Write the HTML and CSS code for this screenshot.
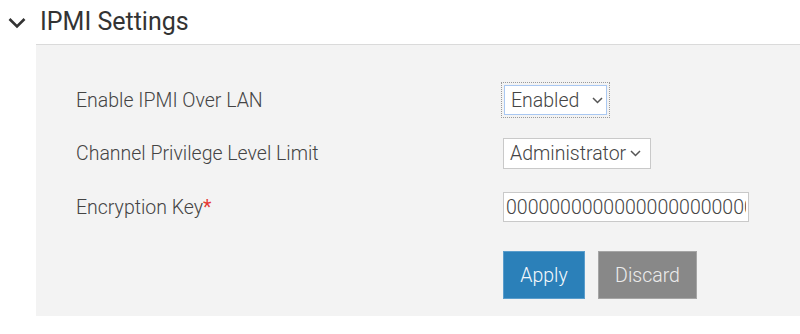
FILE: index.html
```html
<!DOCTYPE html>
<html>
<head>
<meta charset="utf-8">
<link rel="stylesheet" href="styles.css">
</head>
<body>
<div class="header">
  <svg class="caret" width="18" height="12" viewBox="0 0 18 12"><path d="M1.5 2 L9 9.5 L16.5 2" fill="none" stroke="#333" stroke-width="2.6"/></svg>
  <span class="title">IPMI Settings</span>
</div>
<div class="panel">
  <div class="row row1">
    <div class="label">Enable IPMI Over LAN</div>
    <div class="focus-ring">
      <div class="select select-enabled focused"><span>Enabled</span><svg class="chev" width="11" height="7" viewBox="0 0 11 7"><path d="M1 1 L5.5 5.5 L10 1" fill="none" stroke="#555" stroke-width="1.5"/></svg></div>
    </div>
  </div>
  <div class="row row2">
    <div class="label">Channel Privilege Level Limit</div>
    <div class="select select-admin"><span>Administrator</span><svg class="chev" width="11" height="7" viewBox="0 0 11 7"><path d="M1 1 L5.5 5.5 L10 1" fill="none" stroke="#555" stroke-width="1.5"/></svg></div>
  </div>
  <div class="row row3">
    <div class="label">Encryption Key<span class="req">*</span></div>
    <input class="text-input" type="text" value="0000000000000000000000000000000000000000">
  </div>
  <div class="row buttons">
    <div class="label"></div>
    <button class="btn btn-apply">Apply</button>
    <button class="btn btn-discard">Discard</button>
  </div>
</div>
</body>
</html>
```
FILE: styles.css
```css
html, body {
  margin: 0;
  padding: 0;
  background: #fff;
  font-family: Roboto, "Liberation Sans", sans-serif;
  overflow: hidden;
}
.header {
  height: 44px;
  display: flex;
  align-items: center;
}
.caret {
  margin-left: 8px;
  margin-top: 1px;
}
.title {
  margin-left: 14px;
  font-size: 25px;
  color: #333;
  margin-top: -2px;
}
.panel {
  margin-left: 36px;
  background: #f3f3f3;
  border-top: 1px solid #dadada;
  padding: 37px 0 17px 40px;
}
.row {
  display: flex;
  align-items: center;
}
.label {
  width: 427px;
  flex: none;
  font-size: 19.5px;
  font-weight: 300;
  color: #444;
}
.req {
  color: #e53935;
  font-weight: 400;
}
.row1 { height: 36px; }
.row2 { height: 31px; margin-top: 20px; }
.row3 { height: 30px; margin-top: 23px; }
.buttons { height: 48px; margin-top: 29px; }
.focus-ring {
  border: 1px dotted #9a9a9a;
  padding: 2px;
  margin-left: -2px;
}
.select {
  box-sizing: border-box;
  background: #fff;
  border: 1px solid #c9c9c9;
  display: flex;
  align-items: center;
  font-size: 19.5px;
  font-weight: 300;
  color: #444;
  padding-left: 6px;
}
.select.focused {
  border-color: #a9c8f2;
}
.select-enabled {
  width: 103px;
  height: 30px;
}
.select-admin {
  width: 148px;
  height: 31px;
}
.select-enabled .chev { margin-left: 13px; }
.select-admin .chev { margin-left: 4px; }
.text-input {
  box-sizing: border-box;
  width: 246px;
  height: 30px;
  border: 1px solid #c9c9c9;
  background: #fff;
  font-family: Roboto, "Liberation Sans", sans-serif;
  font-size: 19.5px;
  font-weight: 300;
  color: #444;
  padding: 0 2px;
  margin: 0;
  outline: none;
}
.btn {
  box-sizing: border-box;
  height: 48px;
  font-family: Roboto, "Liberation Sans", sans-serif;
  font-size: 19.5px;
  font-weight: 300;
  margin: 0;
  padding: 0;
  cursor: pointer;
}
.btn-apply {
  width: 82px;
  background: #2b80b9;
  border: 1px solid #5a9dcc;
  color: #f4f8fc;
}
.btn-discard {
  width: 99px;
  margin-left: 13px;
  background: #888888;
  border: 1px solid #a5a5a5;
  color: #ececec;
}
```
